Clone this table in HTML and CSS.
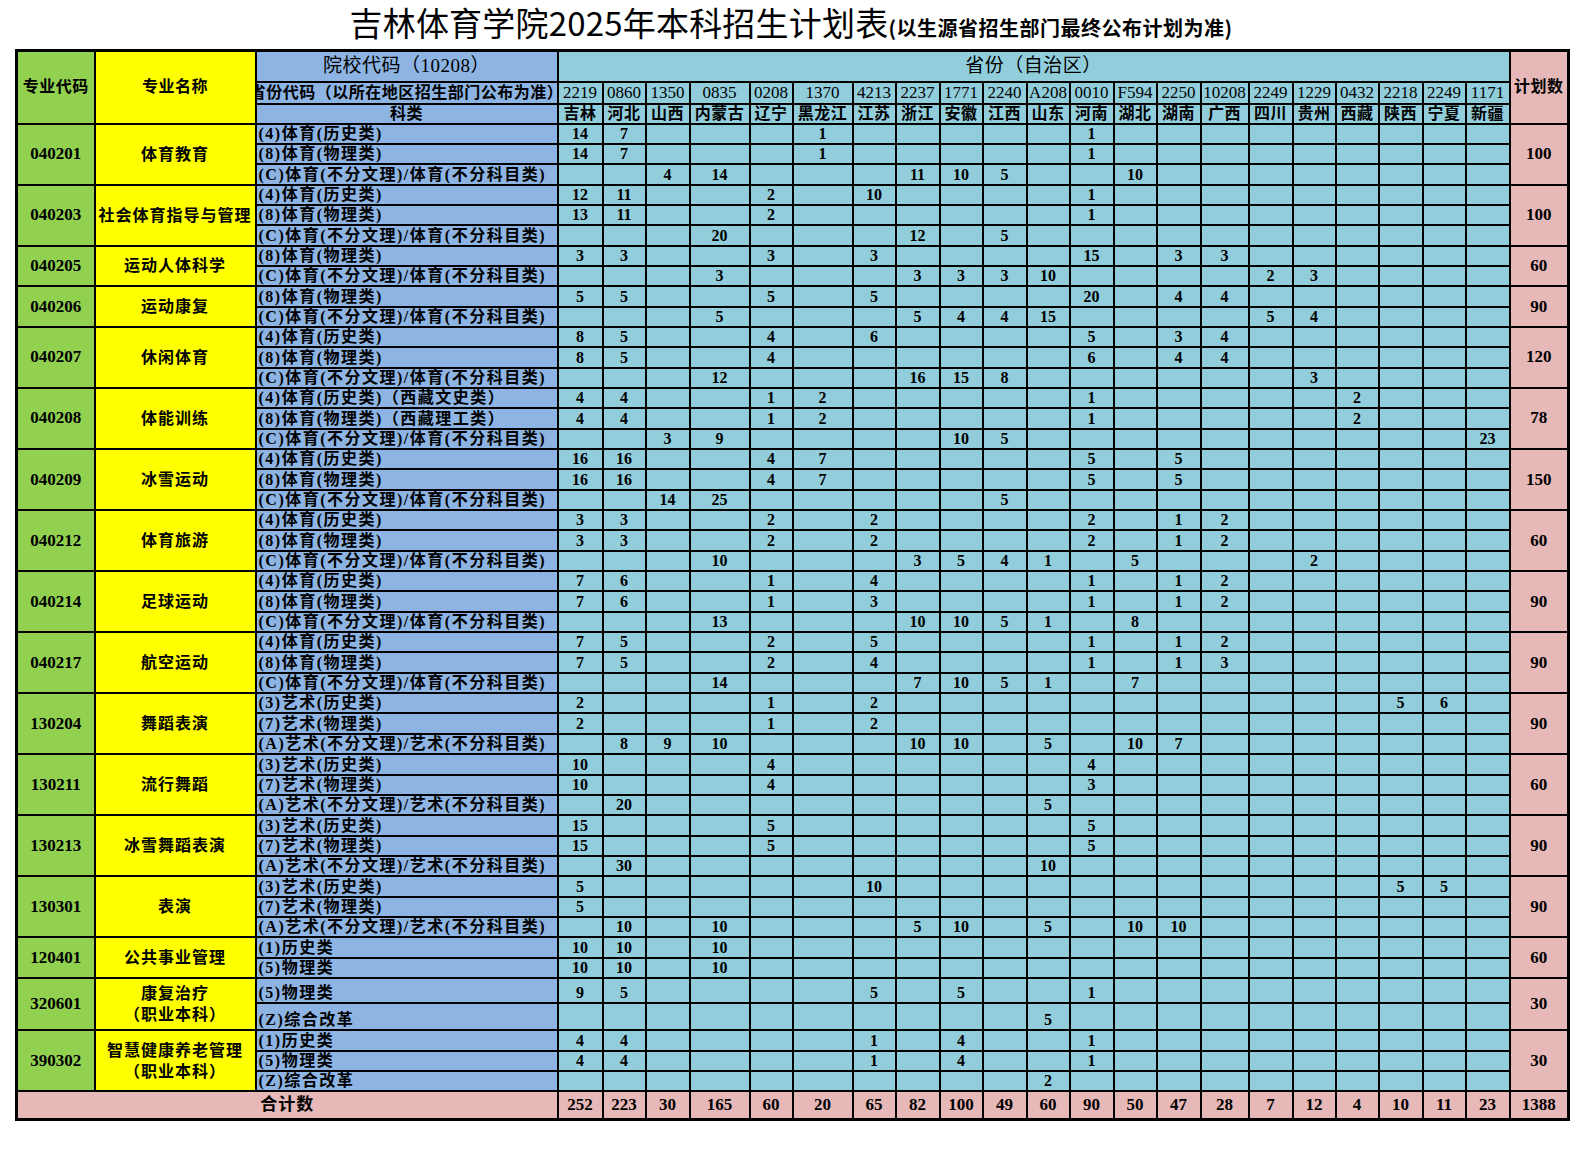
FILE: index.html
```html
<!DOCTYPE html>
<html lang="zh-CN">
<head>
<meta charset="utf-8">
<title>吉林体育学院2025年本科招生计划表</title>
<link rel="stylesheet" href="styles.css">
</head>
<body>
<div class="page">
  <div class="title"><span class="title-main">吉林体育学院2025年本科招生计划表</span><span class="title-note">(以生源省招生部门最终公布计划为准)</span></div>
  <table class="plan">
    <colgroup>
      <col style="width:78px"><col style="width:161px"><col style="width:302px">
      <col style="width:45px"><col style="width:43px"><col style="width:44px"><col style="width:60px"><col style="width:43px"><col style="width:60px"><col style="width:43px"><col style="width:44px"><col style="width:43px"><col style="width:44px"><col style="width:43px"><col style="width:44px"><col style="width:43px"><col style="width:44px"><col style="width:48px"><col style="width:44px"><col style="width:43px"><col style="width:43px"><col style="width:44px"><col style="width:43px"><col style="width:44px">
      <col style="width:59px">
    </colgroup>
    <thead>
      <tr class="h1">
        <th class="g" rowspan="3">专业代码</th>
        <th class="y" rowspan="3">专业名称</th>
        <th class="b big">院校代码（10208）</th>
        <th class="big" colspan="21">省份（自治区）</th>
        <th class="p" rowspan="3">计划数</th>
      </tr>
      <tr class="h2">
        <th class="b"><div class="clip"><span>省份代码（以所在地区招生部门公布为准）</span></div></th>
        <th class="num">2219</th><th class="num">0860</th><th class="num">1350</th><th class="num">0835</th><th class="num">0208</th><th class="num">1370</th><th class="num">4213</th><th class="num">2237</th><th class="num">1771</th><th class="num">2240</th><th class="num">A208</th><th class="num">0010</th><th class="num">F594</th><th class="num">2250</th><th class="num">10208</th><th class="num">2249</th><th class="num">1229</th><th class="num">0432</th><th class="num">2218</th><th class="num">2249</th><th class="num">1171</th>
      </tr>
      <tr class="h3">
        <th class="b">科类</th>
        <th>吉林</th><th>河北</th><th>山西</th><th>内蒙古</th><th>辽宁</th><th>黑龙江</th><th>江苏</th><th>浙江</th><th>安徽</th><th>江西</th><th>山东</th><th>河南</th><th>湖北</th><th>湖南</th><th>广西</th><th>四川</th><th>贵州</th><th>西藏</th><th>陕西</th><th>宁夏</th><th>新疆</th>
      </tr>
    </thead>
    <tbody>
      <tr class="r"><td class="g code" rowspan="3">040201</td><td class="y name" rowspan="3">体育教育</td><td class="b kl">(4)体育(历史类)</td><td>14</td><td>7</td><td></td><td></td><td></td><td>1</td><td></td><td></td><td></td><td></td><td></td><td>1</td><td></td><td></td><td></td><td></td><td></td><td></td><td></td><td></td><td></td><td class="p sum" rowspan="3">100</td></tr>
      <tr class="r"><td class="b kl">(8)体育(物理类)</td><td>14</td><td>7</td><td></td><td></td><td></td><td>1</td><td></td><td></td><td></td><td></td><td></td><td>1</td><td></td><td></td><td></td><td></td><td></td><td></td><td></td><td></td><td></td></tr>
      <tr class="r"><td class="b kl">(C)体育(不分文理)/体育(不分科目类)</td><td></td><td></td><td>4</td><td>14</td><td></td><td></td><td></td><td>11</td><td>10</td><td>5</td><td></td><td></td><td>10</td><td></td><td></td><td></td><td></td><td></td><td></td><td></td><td></td></tr>

      <tr class="r"><td class="g code" rowspan="3">040203</td><td class="y name" rowspan="3">社会体育指导与管理</td><td class="b kl">(4)体育(历史类)</td><td>12</td><td>11</td><td></td><td></td><td>2</td><td></td><td>10</td><td></td><td></td><td></td><td></td><td>1</td><td></td><td></td><td></td><td></td><td></td><td></td><td></td><td></td><td></td><td class="p sum" rowspan="3">100</td></tr>
      <tr class="r"><td class="b kl">(8)体育(物理类)</td><td>13</td><td>11</td><td></td><td></td><td>2</td><td></td><td></td><td></td><td></td><td></td><td></td><td>1</td><td></td><td></td><td></td><td></td><td></td><td></td><td></td><td></td><td></td></tr>
      <tr class="r"><td class="b kl">(C)体育(不分文理)/体育(不分科目类)</td><td></td><td></td><td></td><td>20</td><td></td><td></td><td></td><td>12</td><td></td><td>5</td><td></td><td></td><td></td><td></td><td></td><td></td><td></td><td></td><td></td><td></td><td></td></tr>

      <tr class="r"><td class="g code" rowspan="2">040205</td><td class="y name" rowspan="2">运动人体科学</td><td class="b kl">(8)体育(物理类)</td><td>3</td><td>3</td><td></td><td></td><td>3</td><td></td><td>3</td><td></td><td></td><td></td><td></td><td>15</td><td></td><td>3</td><td>3</td><td></td><td></td><td></td><td></td><td></td><td></td><td class="p sum" rowspan="2">60</td></tr>
      <tr class="r"><td class="b kl">(C)体育(不分文理)/体育(不分科目类)</td><td></td><td></td><td></td><td>3</td><td></td><td></td><td></td><td>3</td><td>3</td><td>3</td><td>10</td><td></td><td></td><td></td><td></td><td>2</td><td>3</td><td></td><td></td><td></td><td></td></tr>

      <tr class="r"><td class="g code" rowspan="2">040206</td><td class="y name" rowspan="2">运动康复</td><td class="b kl">(8)体育(物理类)</td><td>5</td><td>5</td><td></td><td></td><td>5</td><td></td><td>5</td><td></td><td></td><td></td><td></td><td>20</td><td></td><td>4</td><td>4</td><td></td><td></td><td></td><td></td><td></td><td></td><td class="p sum" rowspan="2">90</td></tr>
      <tr class="r"><td class="b kl">(C)体育(不分文理)/体育(不分科目类)</td><td></td><td></td><td></td><td>5</td><td></td><td></td><td></td><td>5</td><td>4</td><td>4</td><td>15</td><td></td><td></td><td></td><td></td><td>5</td><td>4</td><td></td><td></td><td></td><td></td></tr>

      <tr class="r"><td class="g code" rowspan="3">040207</td><td class="y name" rowspan="3">休闲体育</td><td class="b kl">(4)体育(历史类)</td><td>8</td><td>5</td><td></td><td></td><td>4</td><td></td><td>6</td><td></td><td></td><td></td><td></td><td>5</td><td></td><td>3</td><td>4</td><td></td><td></td><td></td><td></td><td></td><td></td><td class="p sum" rowspan="3">120</td></tr>
      <tr class="r"><td class="b kl">(8)体育(物理类)</td><td>8</td><td>5</td><td></td><td></td><td>4</td><td></td><td></td><td></td><td></td><td></td><td></td><td>6</td><td></td><td>4</td><td>4</td><td></td><td></td><td></td><td></td><td></td><td></td></tr>
      <tr class="r"><td class="b kl">(C)体育(不分文理)/体育(不分科目类)</td><td></td><td></td><td></td><td>12</td><td></td><td></td><td></td><td>16</td><td>15</td><td>8</td><td></td><td></td><td></td><td></td><td></td><td></td><td>3</td><td></td><td></td><td></td><td></td></tr>

      <tr class="r"><td class="g code" rowspan="3">040208</td><td class="y name" rowspan="3">体能训练</td><td class="b kl">(4)体育(历史类)（西藏文史类）</td><td>4</td><td>4</td><td></td><td></td><td>1</td><td>2</td><td></td><td></td><td></td><td></td><td></td><td>1</td><td></td><td></td><td></td><td></td><td></td><td>2</td><td></td><td></td><td></td><td class="p sum" rowspan="3">78</td></tr>
      <tr class="r"><td class="b kl">(8)体育(物理类)（西藏理工类）</td><td>4</td><td>4</td><td></td><td></td><td>1</td><td>2</td><td></td><td></td><td></td><td></td><td></td><td>1</td><td></td><td></td><td></td><td></td><td></td><td>2</td><td></td><td></td><td></td></tr>
      <tr class="r"><td class="b kl">(C)体育(不分文理)/体育(不分科目类)</td><td></td><td></td><td>3</td><td>9</td><td></td><td></td><td></td><td></td><td>10</td><td>5</td><td></td><td></td><td></td><td></td><td></td><td></td><td></td><td></td><td></td><td></td><td>23</td></tr>

      <tr class="r"><td class="g code" rowspan="3">040209</td><td class="y name" rowspan="3">冰雪运动</td><td class="b kl">(4)体育(历史类)</td><td>16</td><td>16</td><td></td><td></td><td>4</td><td>7</td><td></td><td></td><td></td><td></td><td></td><td>5</td><td></td><td>5</td><td></td><td></td><td></td><td></td><td></td><td></td><td></td><td class="p sum" rowspan="3">150</td></tr>
      <tr class="r"><td class="b kl">(8)体育(物理类)</td><td>16</td><td>16</td><td></td><td></td><td>4</td><td>7</td><td></td><td></td><td></td><td></td><td></td><td>5</td><td></td><td>5</td><td></td><td></td><td></td><td></td><td></td><td></td><td></td></tr>
      <tr class="r"><td class="b kl">(C)体育(不分文理)/体育(不分科目类)</td><td></td><td></td><td>14</td><td>25</td><td></td><td></td><td></td><td></td><td></td><td>5</td><td></td><td></td><td></td><td></td><td></td><td></td><td></td><td></td><td></td><td></td><td></td></tr>

      <tr class="r"><td class="g code" rowspan="3">040212</td><td class="y name" rowspan="3">体育旅游</td><td class="b kl">(4)体育(历史类)</td><td>3</td><td>3</td><td></td><td></td><td>2</td><td></td><td>2</td><td></td><td></td><td></td><td></td><td>2</td><td></td><td>1</td><td>2</td><td></td><td></td><td></td><td></td><td></td><td></td><td class="p sum" rowspan="3">60</td></tr>
      <tr class="r"><td class="b kl">(8)体育(物理类)</td><td>3</td><td>3</td><td></td><td></td><td>2</td><td></td><td>2</td><td></td><td></td><td></td><td></td><td>2</td><td></td><td>1</td><td>2</td><td></td><td></td><td></td><td></td><td></td><td></td></tr>
      <tr class="r"><td class="b kl">(C)体育(不分文理)/体育(不分科目类)</td><td></td><td></td><td></td><td>10</td><td></td><td></td><td></td><td>3</td><td>5</td><td>4</td><td>1</td><td></td><td>5</td><td></td><td></td><td></td><td>2</td><td></td><td></td><td></td><td></td></tr>

      <tr class="r"><td class="g code" rowspan="3">040214</td><td class="y name" rowspan="3">足球运动</td><td class="b kl">(4)体育(历史类)</td><td>7</td><td>6</td><td></td><td></td><td>1</td><td></td><td>4</td><td></td><td></td><td></td><td></td><td>1</td><td></td><td>1</td><td>2</td><td></td><td></td><td></td><td></td><td></td><td></td><td class="p sum" rowspan="3">90</td></tr>
      <tr class="r"><td class="b kl">(8)体育(物理类)</td><td>7</td><td>6</td><td></td><td></td><td>1</td><td></td><td>3</td><td></td><td></td><td></td><td></td><td>1</td><td></td><td>1</td><td>2</td><td></td><td></td><td></td><td></td><td></td><td></td></tr>
      <tr class="r"><td class="b kl">(C)体育(不分文理)/体育(不分科目类)</td><td></td><td></td><td></td><td>13</td><td></td><td></td><td></td><td>10</td><td>10</td><td>5</td><td>1</td><td></td><td>8</td><td></td><td></td><td></td><td></td><td></td><td></td><td></td><td></td></tr>

      <tr class="r"><td class="g code" rowspan="3">040217</td><td class="y name" rowspan="3">航空运动</td><td class="b kl">(4)体育(历史类)</td><td>7</td><td>5</td><td></td><td></td><td>2</td><td></td><td>5</td><td></td><td></td><td></td><td></td><td>1</td><td></td><td>1</td><td>2</td><td></td><td></td><td></td><td></td><td></td><td></td><td class="p sum" rowspan="3">90</td></tr>
      <tr class="r"><td class="b kl">(8)体育(物理类)</td><td>7</td><td>5</td><td></td><td></td><td>2</td><td></td><td>4</td><td></td><td></td><td></td><td></td><td>1</td><td></td><td>1</td><td>3</td><td></td><td></td><td></td><td></td><td></td><td></td></tr>
      <tr class="r"><td class="b kl">(C)体育(不分文理)/体育(不分科目类)</td><td></td><td></td><td></td><td>14</td><td></td><td></td><td></td><td>7</td><td>10</td><td>5</td><td>1</td><td></td><td>7</td><td></td><td></td><td></td><td></td><td></td><td></td><td></td><td></td></tr>

      <tr class="r"><td class="g code" rowspan="3">130204</td><td class="y name" rowspan="3">舞蹈表演</td><td class="b kl">(3)艺术(历史类)</td><td>2</td><td></td><td></td><td></td><td>1</td><td></td><td>2</td><td></td><td></td><td></td><td></td><td></td><td></td><td></td><td></td><td></td><td></td><td></td><td>5</td><td>6</td><td></td><td class="p sum" rowspan="3">90</td></tr>
      <tr class="r"><td class="b kl">(7)艺术(物理类)</td><td>2</td><td></td><td></td><td></td><td>1</td><td></td><td>2</td><td></td><td></td><td></td><td></td><td></td><td></td><td></td><td></td><td></td><td></td><td></td><td></td><td></td><td></td></tr>
      <tr class="r"><td class="b kl">(A)艺术(不分文理)/艺术(不分科目类)</td><td></td><td>8</td><td>9</td><td>10</td><td></td><td></td><td></td><td>10</td><td>10</td><td></td><td>5</td><td></td><td>10</td><td>7</td><td></td><td></td><td></td><td></td><td></td><td></td><td></td></tr>

      <tr class="r"><td class="g code" rowspan="3">130211</td><td class="y name" rowspan="3">流行舞蹈</td><td class="b kl">(3)艺术(历史类)</td><td>10</td><td></td><td></td><td></td><td>4</td><td></td><td></td><td></td><td></td><td></td><td></td><td>4</td><td></td><td></td><td></td><td></td><td></td><td></td><td></td><td></td><td></td><td class="p sum" rowspan="3">60</td></tr>
      <tr class="r"><td class="b kl">(7)艺术(物理类)</td><td>10</td><td></td><td></td><td></td><td>4</td><td></td><td></td><td></td><td></td><td></td><td></td><td>3</td><td></td><td></td><td></td><td></td><td></td><td></td><td></td><td></td><td></td></tr>
      <tr class="r"><td class="b kl">(A)艺术(不分文理)/艺术(不分科目类)</td><td></td><td>20</td><td></td><td></td><td></td><td></td><td></td><td></td><td></td><td></td><td>5</td><td></td><td></td><td></td><td></td><td></td><td></td><td></td><td></td><td></td><td></td></tr>

      <tr class="r"><td class="g code" rowspan="3">130213</td><td class="y name" rowspan="3">冰雪舞蹈表演</td><td class="b kl">(3)艺术(历史类)</td><td>15</td><td></td><td></td><td></td><td>5</td><td></td><td></td><td></td><td></td><td></td><td></td><td>5</td><td></td><td></td><td></td><td></td><td></td><td></td><td></td><td></td><td></td><td class="p sum" rowspan="3">90</td></tr>
      <tr class="r"><td class="b kl">(7)艺术(物理类)</td><td>15</td><td></td><td></td><td></td><td>5</td><td></td><td></td><td></td><td></td><td></td><td></td><td>5</td><td></td><td></td><td></td><td></td><td></td><td></td><td></td><td></td><td></td></tr>
      <tr class="r"><td class="b kl">(A)艺术(不分文理)/艺术(不分科目类)</td><td></td><td>30</td><td></td><td></td><td></td><td></td><td></td><td></td><td></td><td></td><td>10</td><td></td><td></td><td></td><td></td><td></td><td></td><td></td><td></td><td></td><td></td></tr>

      <tr class="r"><td class="g code" rowspan="3">130301</td><td class="y name" rowspan="3">表演</td><td class="b kl">(3)艺术(历史类)</td><td>5</td><td></td><td></td><td></td><td></td><td></td><td>10</td><td></td><td></td><td></td><td></td><td></td><td></td><td></td><td></td><td></td><td></td><td></td><td>5</td><td>5</td><td></td><td class="p sum" rowspan="3">90</td></tr>
      <tr class="r"><td class="b kl">(7)艺术(物理类)</td><td>5</td><td></td><td></td><td></td><td></td><td></td><td></td><td></td><td></td><td></td><td></td><td></td><td></td><td></td><td></td><td></td><td></td><td></td><td></td><td></td><td></td></tr>
      <tr class="r"><td class="b kl">(A)艺术(不分文理)/艺术(不分科目类)</td><td></td><td>10</td><td></td><td>10</td><td></td><td></td><td></td><td>5</td><td>10</td><td></td><td>5</td><td></td><td>10</td><td>10</td><td></td><td></td><td></td><td></td><td></td><td></td><td></td></tr>

      <tr class="r"><td class="g code" rowspan="2">120401</td><td class="y name" rowspan="2">公共事业管理</td><td class="b kl">(1)历史类</td><td>10</td><td>10</td><td></td><td>10</td><td></td><td></td><td></td><td></td><td></td><td></td><td></td><td></td><td></td><td></td><td></td><td></td><td></td><td></td><td></td><td></td><td></td><td class="p sum" rowspan="2">60</td></tr>
      <tr class="r"><td class="b kl">(5)物理类</td><td>10</td><td>10</td><td></td><td>10</td><td></td><td></td><td></td><td></td><td></td><td></td><td></td><td></td><td></td><td></td><td></td><td></td><td></td><td></td><td></td><td></td><td></td></tr>

      <tr class="r320a"><td class="g code" rowspan="2">320601</td><td class="y name" rowspan="2">康复治疗<br>（职业本科）</td><td class="b kl">(5)物理类</td><td>9</td><td>5</td><td></td><td></td><td></td><td></td><td>5</td><td></td><td>5</td><td></td><td></td><td>1</td><td></td><td></td><td></td><td></td><td></td><td></td><td></td><td></td><td></td><td class="p sum" rowspan="2">30</td></tr>
      <tr class="r320b"><td class="b kl">(Z)综合改革</td><td></td><td></td><td></td><td></td><td></td><td></td><td></td><td></td><td></td><td></td><td>5</td><td></td><td></td><td></td><td></td><td></td><td></td><td></td><td></td><td></td><td></td></tr>

      <tr class="r"><td class="g code" rowspan="3">390302</td><td class="y name" rowspan="3">智慧健康养老管理<br>（职业本科）</td><td class="b kl">(1)历史类</td><td>4</td><td>4</td><td></td><td></td><td></td><td></td><td>1</td><td></td><td>4</td><td></td><td></td><td>1</td><td></td><td></td><td></td><td></td><td></td><td></td><td></td><td></td><td></td><td class="p sum" rowspan="3">30</td></tr>
      <tr class="r"><td class="b kl">(5)物理类</td><td>4</td><td>4</td><td></td><td></td><td></td><td></td><td>1</td><td></td><td>4</td><td></td><td></td><td>1</td><td></td><td></td><td></td><td></td><td></td><td></td><td></td><td></td><td></td></tr>
      <tr class="r"><td class="b kl">(Z)综合改革</td><td></td><td></td><td></td><td></td><td></td><td></td><td></td><td></td><td></td><td></td><td>2</td><td></td><td></td><td></td><td></td><td></td><td></td><td></td><td></td><td></td><td></td></tr>
    </tbody>
    <tfoot>
      <tr class="tot">
        <td class="label" colspan="3">合计数</td>
        <td>252</td><td>223</td><td>30</td><td>165</td><td>60</td><td>20</td><td>65</td><td>82</td><td>100</td><td>49</td><td>60</td><td>90</td><td>50</td><td>47</td><td>28</td><td>7</td><td>12</td><td>4</td><td>10</td><td>11</td><td>23</td><td>1388</td>
      </tr>
    </tfoot>
  </table>
</div>
</body>
</html>
```

FILE: styles.css
```css
* { box-sizing: border-box; }
html, body { margin: 0; padding: 0; background: #ffffff; }
body {
  font-family: "Liberation Serif", "Noto Sans CJK SC", serif;
  color: #000000;
}
.page {
  width: 1583px;
  padding-left: 15px;
}
.title {
  width: 1552px;
  height: 49px;
  line-height: 44px;
  text-align: center;
  white-space: nowrap;
}
.title-main {
  font-family: "Noto Sans CJK SC", sans-serif;
  font-size: 33px;
  font-weight: 400;
  letter-spacing: 0.2px;
}
.title-note {
  font-family: "Noto Sans CJK SC", sans-serif;
  font-size: 20px;
  font-weight: 700;
  letter-spacing: 0.5px;
}

.plan {
  border-collapse: collapse;
  table-layout: fixed;
  width: 1552px;
  border: 3px solid #000000;
}
.plan th,
.plan td {
  border: 2px solid #000000;
  padding: 0;
  font-size: 16px;
  font-weight: 700;
  line-height: 18px;
  text-align: center;
  white-space: nowrap;
  overflow: hidden;
  background: #92cddc;
  vertical-align: middle;
}
.plan .g { background: #92d050; }
.plan .y { background: #ffff00; }
.plan .b { background: #8db4e2; }
.plan .p { background: #e6b8b7; }

.plan thead th { letter-spacing: 0.5px; }
.plan th.big {
  font-size: 19px;
  font-weight: 400;
  letter-spacing: 0.5px;
}
.plan th.num {
  font-size: 17px;
  font-weight: 400;
  letter-spacing: 0;
}
.clip {
  display: flex;
  justify-content: center;
  overflow: hidden;
  width: 100%;
  letter-spacing: 0.5px;
}
.clip span { flex: none; }

.h1 { height: 31px; }
.h2 { height: 22px; }
.h3 { height: 20px; }
.r { height: 20.35px; }
.r320a { height: 25.5px; }
.r320b { height: 27px; }
.tot { height: 28px; }

.plan tbody td { vertical-align: bottom; }
.plan tbody td.code,
.plan tbody td.name,
.plan tbody td.sum { vertical-align: middle; }
.plan td.code { font-size: 17px; }
.plan td.name { letter-spacing: 1px; line-height: 21px; }
.plan td.kl {
  text-align: left;
  padding-left: 2px;
  letter-spacing: 1.5px;
}
.plan td.sum { font-size: 17px; }
.plan .tot td {
  background: #e6b8b7;
  font-size: 17px;
  vertical-align: middle;
}
.plan .tot td.label { letter-spacing: 1px; }
```
